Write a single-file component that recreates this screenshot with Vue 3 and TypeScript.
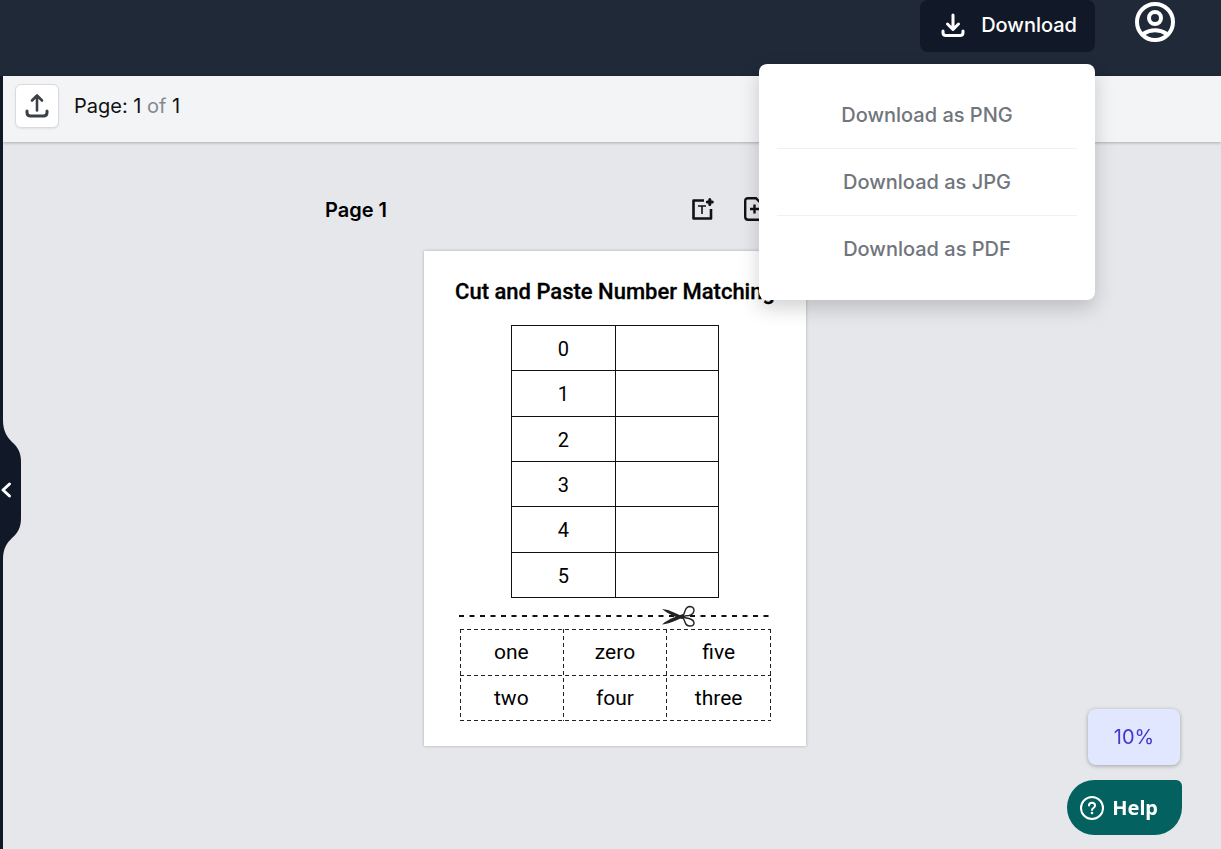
<script setup lang="ts">
import { ref } from 'vue'

const formats: string[] = ['PNG', 'JPG', 'PDF']
const numbers: number[] = [0, 1, 2, 3, 4, 5]
const words: string[][] = [
  ['one', 'zero', 'five'],
  ['two', 'four', 'three'],
]
const currentPage = ref(1)
const pageCount = ref(1)
const zoomLevel = ref(10)
const menuOpen = ref(true)
</script>

<template>
  <div class="app">
    <header class="topbar">
      <div class="download">
        <button class="download-btn" type="button" :aria-expanded="menuOpen" @click="menuOpen = !menuOpen">
          <svg width="26" height="26" viewBox="0 0 26 26" fill="none" stroke="currentColor" stroke-width="3" stroke-linecap="round" stroke-linejoin="round">
            <path d="M13 3v14M7.500 12l5.500 5.500 5.500-5.500M3 19v1.500q0 3 3 3h14q3 0 3-3V19" />
          </svg>
          <span>Download</span>
        </button>
        <div v-if="menuOpen" class="menu">
          <button v-for="f in formats" :key="f" class="menu-item" type="button">Download as {{ f }}</button>
        </div>
      </div>
      <button class="account" type="button" aria-label="Account">
        <svg width="40" height="40" viewBox="0 0 40 40" fill="none" stroke="currentColor" stroke-width="4">
          <circle cx="20" cy="20" r="18" />
          <circle cx="20" cy="16" r="6" />
          <path d="M8 32q12-7.500 24 0" />
        </svg>
      </button>
    </header>

    <div class="body">
      <aside class="rail">
        <button class="collapse" type="button" aria-label="Collapse panel">
          <svg width="21" height="150" viewBox="0 0 21 150">
            <path fill="#111827" d="M0 0H3V6C3 17 7 23 12 28C18 33 21 39 21 48V104C21 113 18 119 12 124C7 129 3 134 3 146V150H0Z" />
            <path d="M9.500 70L3 76L9.500 82" fill="none" stroke="#fff" stroke-width="3" stroke-linecap="round" stroke-linejoin="round" />
          </svg>
        </button>
      </aside>

      <main class="workspace">
        <div class="toolbar">
          <button class="upload" type="button" aria-label="Upload">
            <svg width="26" height="26" viewBox="0 0 26 26" fill="none" stroke="currentColor" stroke-linecap="round" stroke-linejoin="round">
              <path stroke-width="2.600" d="M13 17.500V3M8 7.500L13 2.500 18 7.500" />
              <path stroke-width="3" d="M3 18v1.500q0 3.500 3.500 3.500h13q3.500 0 3.500-3.500V18" />
            </svg>
          </button>
          <span class="pager">Page: {{ currentPage }} <span class="of">of</span> {{ pageCount }}</span>
        </div>

        <div class="canvas">
          <div class="page-head">
            <h2>Page {{ currentPage }}</h2>
            <div class="page-tools">
              <button type="button" aria-label="Add text">
                <svg width="24" height="24" viewBox="0 0 24 24" fill="none" stroke="currentColor" stroke-width="2.600">
                  <path stroke-linejoin="round" d="M13 3.500H2.500V21.500H20V12" />
                  <path stroke-width="1.600" d="M7 9H15M11 9V17" />
                  <path stroke-width="3" stroke-linecap="round" d="M18.800 2.500V7.500M16.300 5H21.300" />
                </svg>
              </button>
              <button type="button" aria-label="Add page">
                <svg width="24" height="24" viewBox="0 0 24 24" fill="none" stroke="currentColor" stroke-width="2.400">
                  <path d="M13 1.200H5.200q-3 0-3 3v15.600q0 3 3 3h13q3 0 3-3V9.500Z" />
                  <path d="M11.500 7.500V16.500M7 12H16" />
                </svg>
              </button>
            </div>
          </div>

          <section class="sheet">
            <h1>Cut and Paste Number Matching</h1>
            <table class="numbers">
              <tbody>
                <tr v-for="n in numbers" :key="n">
                  <td>{{ n }}</td>
                  <td></td>
                </tr>
              </tbody>
            </table>
            <svg class="cut-line" width="312" height="24" viewBox="0 0 312 24" aria-hidden="true">
              <path d="M0 11H310" stroke="#111" stroke-width="2.200" stroke-dasharray="5 5.500" fill="none" />
              <g fill="#222">
                <path d="M203 4Q209 4 215 7.500L226 12.500 223 14Q210 10 203 4Z" />
                <path d="M203 19.500Q208 15 216 12L224 9 227 11 217 15.500Q209 19 203 19.500Z" />
              </g>
              <g fill="#fff" stroke="#222" stroke-width="1.400">
                <path d="M223 11.500Q225 10 226 6 227.500 1.500 231 1.500 235 2 235 5.500 234.500 9.500 230 10.500 226 10.500 223 12Z" />
                <path d="M223 11.500Q226 13 230 13.500 235 15 235 18 235 21 231 21 227 21 226 17 225 14 223 12Z" />
              </g>
            </svg>
            <table class="words">
              <tbody>
                <tr v-for="(row, i) in words" :key="i">
                  <td v-for="w in row" :key="w">{{ w }}</td>
                </tr>
              </tbody>
            </table>
          </section>
        </div>
      </main>
    </div>

    <div class="floating">
      <button class="zoom" type="button">{{ zoomLevel }}%</button>
      <button class="help" type="button">
        <svg width="24" height="24" viewBox="0 0 24 24" fill="none" stroke="currentColor" stroke-width="2">
          <circle cx="12" cy="12" r="11" />
          <path stroke-linecap="round" stroke-linejoin="round" d="M9 9.500Q9 6.800 12 6.800T15 9.500Q15 11 13.500 12T12 14" />
          <circle cx="12" cy="17" r="1.300" fill="currentColor" stroke="none" />
        </svg>
        <span>Help</span>
      </button>
    </div>
  </div>
</template>

<style>
body {
  margin: 0;
  background: #e5e7eb;
}
</style>

<style scoped>
.app {
  display: flex;
  flex-direction: column;
  min-height: 100vh;
  font-family: Inter, "Liberation Sans", sans-serif;
  font-size: 20px;
  color: #111;
}
button {
  font: inherit;
  border: 0;
  padding: 0;
  background: none;
  color: inherit;
  cursor: pointer;
}
svg {
  display: block;
}
h1,
h2 {
  margin: 0;
}
.topbar {
  display: flex;
  justify-content: flex-end;
  align-items: flex-start;
  gap: 40px;
  height: 76px;
  padding-right: 46px;
  background: #1f2937;
  color: #fff;
}
.download {
  position: relative;
}
.download-btn {
  display: flex;
  align-items: center;
  gap: 15px;
  height: 52px;
  padding: 0 18px 2px 20px;
  box-sizing: border-box;
  border-radius: 8px;
  background: #111827;
  font-weight: 500;
}
.account {
  margin-top: 2px;
}
.menu {
  position: absolute;
  z-index: 5;
  top: 64px;
  right: 0;
  width: 336px;
  box-sizing: border-box;
  padding: 17px 18px 18px;
  display: flex;
  flex-direction: column;
  border-radius: 8px;
  background: #fff;
  box-shadow: 0 8px 20px rgba(0, 0, 0, 0.18);
}
.menu-item {
  height: 67px;
  color: #71757c;
  font-weight: 500;
}
.menu-item + .menu-item {
  border-top: 1px solid #f0f1f3;
}
.body {
  flex: 1;
  display: flex;
}
.rail {
  position: relative;
  width: 3px;
  background: #111827;
}
.collapse {
  position: absolute;
  top: 338px;
  left: 0;
}
.workspace {
  flex: 1;
  display: flex;
  flex-direction: column;
}
.toolbar {
  display: flex;
  align-items: flex-start;
  gap: 15px;
  height: 66px;
  box-sizing: border-box;
  padding: 8px 12px;
  background: #f3f4f6;
  box-shadow: 0 1px 3px rgba(0, 0, 0, 0.25);
}
.upload {
  display: grid;
  place-items: center;
  width: 44px;
  height: 44px;
  box-sizing: border-box;
  border: 1px solid #d9dbdf;
  border-radius: 6px;
  background: #fff;
  color: #3c4148;
  box-shadow: 0 1px 2px rgba(0, 0, 0, 0.08);
}
.pager {
  line-height: 44px;
}
.of {
  color: #85888e;
}
.canvas {
  flex: 1;
  display: flex;
  flex-direction: column;
  align-items: center;
  padding: 54px 0 24px 6px;
}
.page-head {
  display: flex;
  justify-content: space-between;
  align-items: center;
  width: 580px;
  height: 28px;
}
.page-head h2 {
  font-size: 20px;
  font-weight: 600;
  color: #000;
}
.page-tools {
  display: flex;
  align-items: center;
  gap: 28px;
  width: 214px;
  padding-bottom: 2px;
}
.sheet {
  display: flex;
  flex-direction: column;
  align-items: center;
  width: 382px;
  height: 495px;
  box-sizing: border-box;
  margin-top: 27px;
  padding-top: 25px;
  background: #fff;
  color: #000;
  font-family: Roboto, sans-serif;
  box-shadow: 0 0 3px rgba(0, 0, 0, 0.25);
}
.sheet h1 {
  font-size: 22px;
  line-height: 32px;
  font-weight: 500;
  white-space: nowrap;
  -webkit-text-stroke: 0.3px #000;
}
table {
  border-collapse: collapse;
  table-layout: fixed;
}
td {
  padding: 1px 0 0;
  text-align: center;
}
.numbers {
  width: 208px;
  height: 273px;
  margin-top: 17px;
}
.numbers td {
  padding-top: 2px;
  border: 1px solid #111;
}
.cut-line {
  margin-top: 7px;
}
.words {
  --across: repeating-linear-gradient(90deg, #222 0 4px, transparent 4px 7px);
  --down: repeating-linear-gradient(180deg, #222 0 4px, transparent 4px 7px);
  width: 311px;
  height: 92px;
  background:
    var(--across) 0 0 / 100% 1px no-repeat,
    var(--across) 0 50% / 100% 1px no-repeat,
    var(--across) 0 100% / 100% 1px no-repeat,
    var(--down) 0 0 / 1px 100% no-repeat,
    var(--down) 33.333% 0 / 1px 100% no-repeat,
    var(--down) 66.667% 0 / 1px 100% no-repeat,
    var(--down) 100% 0 / 1px 100% no-repeat;
}
.words td {
  padding-bottom: 1px;
  font-size: 21px;
}
.floating {
  position: fixed;
  right: 39px;
  bottom: 14px;
  display: flex;
  flex-direction: column;
  align-items: flex-end;
  gap: 15px;
}
.zoom {
  width: 92px;
  height: 56px;
  margin-right: 2px;
  border-radius: 8px;
  background: #e0e7ff;
  color: #4338ca;
  box-shadow: 0 1px 4px rgba(0, 0, 0, 0.3);
}
.help {
  display: flex;
  align-items: center;
  gap: 8px;
  height: 55px;
  padding: 0 24px 0 13px;
  border-radius: 28px 6px 28px 28px;
  background: #03615f;
  color: #fff;
  font-family: "Noto Sans", sans-serif;
  font-weight: 700;
}
</style>
